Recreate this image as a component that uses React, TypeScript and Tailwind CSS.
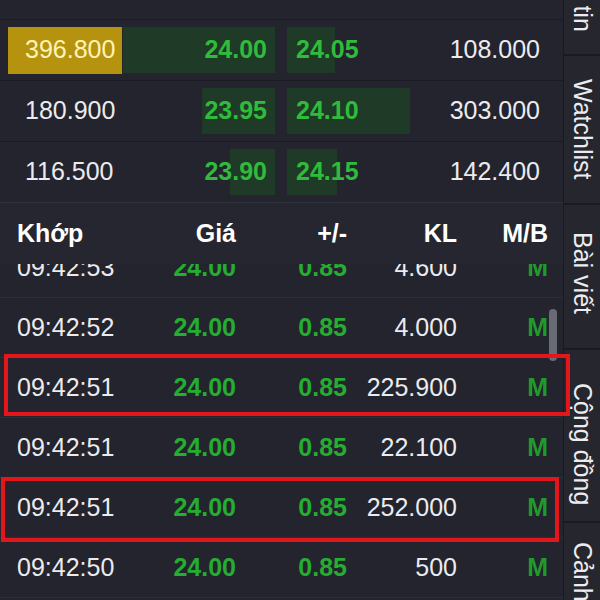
import React from 'react';

type BookRow = {
    bidVol: string;
    bid: string;
    ask: string;
    askVol: string;
    bidBar: number;
    askBar: number;
    top?: boolean;
};

const book: BookRow[] = [
    { bidVol: '396.800', bid: '24.00', ask: '24.05', askVol: '108.000', bidBar: 152, askBar: 48, top: true },
    { bidVol: '180.900', bid: '23.95', ask: '24.10', askVol: '303.000', bidBar: 73, askBar: 123 },
    { bidVol: '116.500', bid: '23.90', ask: '24.15', askVol: '142.400', bidBar: 45, askBar: 50 },
];

const trades = [
    { time: '09:42:53', price: '24.00', chg: '0.85', vol: '4.600' },
    { time: '09:42:52', price: '24.00', chg: '0.85', vol: '4.000' },
    { time: '09:42:51', price: '24.00', chg: '0.85', vol: '225.900' },
    { time: '09:42:51', price: '24.00', chg: '0.85', vol: '22.100' },
    { time: '09:42:51', price: '24.00', chg: '0.85', vol: '252.000' },
    { time: '09:42:50', price: '24.00', chg: '0.85', vol: '500' },
];

const tabs = [
    { label: 'Bản tin', cls: 'h-[76px] justify-end pb-[22px] -mt-[20px]' },
    { label: 'Watchlist', cls: 'h-[149px] pt-[23px]' },
    { label: 'Bài viết', cls: 'h-[145px] pt-[27px]' },
    { label: 'Cộng đồng', cls: 'h-[173px] pt-[33px]' },
    { label: 'Cảnh báo', cls: 'h-[120px] pt-[19px]' },
];

export default function App() {
    return (
        <div className="relative flex h-[600px] w-[600px] overflow-hidden bg-[#23242d] font-['Liberation_Sans',Arial,sans-serif] text-[25px] text-[#ebebef]">
            {/* Main panel */}
            <div className="flex w-[563px] shrink-0 flex-col">
                {/* Order book (header scrolled off) */}
                <div className="h-[19px] shrink-0" />
                {book.map((r, i) => (
                    <div key={i} className="flex h-[61px] shrink-0 items-center border-t border-[#1b1c23]">
                        <div className="flex h-full w-[122px] shrink-0 items-center pl-[8px]">
                            {r.top ? (
                                <div className="flex h-[47px] w-[114px] items-center bg-[#b5930f] pl-[17px] text-[#fff3b5]">
                                    {r.bidVol}
                                </div>
                            ) : (
                                <span className="pl-[17px]">{r.bidVol}</span>
                            )}
                        </div>
                        <div className="relative flex h-full w-[153px] shrink-0 items-center justify-end pr-[8px]">
                            <div className="absolute top-[7px] right-0 bottom-[7px] bg-[#203a28]" style={{ width: r.bidBar }} />
                            <span className="relative font-bold text-[#2fbb3b]">{r.bid}</span>
                        </div>
                        <div className="w-[12px] shrink-0" />
                        <div className="relative flex h-full w-[150px] shrink-0 items-center pl-[9px]">
                            <div className="absolute top-[7px] bottom-[7px] left-0 bg-[#203a28]" style={{ width: r.askBar }} />
                            <span className="relative font-bold text-[#2fbb3b]">{r.ask}</span>
                        </div>
                        <div className="flex-1 pr-[23px] text-right">{r.askVol}</div>
                    </div>
                ))}

                {/* Matched trades header */}
                <div className="z-10 flex h-[62px] shrink-0 items-center border-t border-[#30323b] bg-[#25262f] font-bold text-white">
                    <div className="w-[130px] shrink-0 pl-[17px]">Khớp</div>
                    <div className="w-[106px] shrink-0 text-right">Giá</div>
                    <div className="w-[111px] shrink-0 text-right">+/-</div>
                    <div className="w-[110px] shrink-0 text-right">KL</div>
                    <div className="w-[91px] shrink-0 text-right">M/B</div>
                </div>

                {/* Trades list */}
                <div className="relative flex-1 overflow-hidden">
                    <div className="-mt-[26px] flex flex-col">
                        {trades.map((t, i) => (
                            <div key={i} className="flex h-[60px] shrink-0 items-center border-b border-[#2c2e38]">
                                <div className="w-[130px] shrink-0 pl-[17px]">{t.time}</div>
                                <div className="w-[106px] shrink-0 text-right font-bold text-[#25ad31]">{t.price}</div>
                                <div className="w-[111px] shrink-0 text-right font-bold text-[#25ad31]">{t.chg}</div>
                                <div className="w-[110px] shrink-0 text-right">{t.vol}</div>
                                <div className="w-[91px] shrink-0 text-right font-bold text-[#1f9a2b]">M</div>
                            </div>
                        ))}
                    </div>
                    {/* scrollbar thumb */}
                    <div className="absolute top-[45px] left-[549px] h-[52px] w-[8px] rounded-full bg-[#686b73]" />
                </div>
            </div>

            {/* Right side tabs */}
            <div className="flex flex-1 flex-col border-l border-[#1a1b21] bg-[#25262e]">
                {tabs.map((t) => (
                    <div key={t.label} className={`flex shrink-0 flex-col items-center border-b-2 border-[#1a1b21] ${t.cls}`}>
                        <span className="leading-none whitespace-nowrap text-[#ececf0] [writing-mode:vertical-rl]">{t.label}</span>
                    </div>
                ))}
            </div>

            {/* Highlight boxes */}
            <div className="absolute top-[354px] left-[4px] h-[62px] w-[566px] border-4 border-[#e3161b]" />
            <div className="absolute top-[477px] left-[1px] h-[65px] w-[558px] border-4 border-[#e3161b]" />
        </div>
    );
}
